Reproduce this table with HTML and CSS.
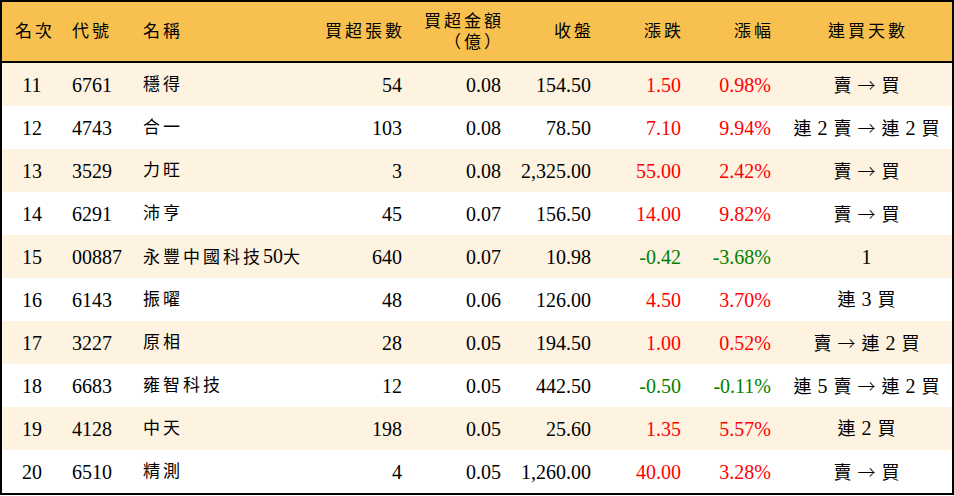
FILE: index.html
```html
<!DOCTYPE html>
<html lang="zh-Hant">
<head>
<meta charset="utf-8">
<title>買超排行</title>
<link rel="stylesheet" href="styles.css">
</head>
<body>
<table class="rank">
  <colgroup>
    <col class="c-rank"><col class="c-code"><col class="c-name"><col class="c-vol"><col class="c-amt"><col class="c-close"><col class="c-chg"><col class="c-pct"><col class="c-days">
  </colgroup>
  <thead>
    <tr>
      <th class="ctr">名次</th>
      <th class="lft">代號</th>
      <th class="lft">名稱</th>
      <th class="rgt">買超張數</th>
      <th class="rgt">買超金額<br>（億）</th>
      <th class="rgt">收盤</th>
      <th class="rgt">漲跌</th>
      <th class="rgt">漲幅</th>
      <th class="ctr">連買天數</th>
    </tr>
  </thead>
  <tbody>
    <tr><td class="ctr">11</td><td class="lft">6761</td><td class="lft zh">穩得</td><td class="rgt">54</td><td class="rgt">0.08</td><td class="rgt">154.50</td><td class="rgt up">1.50</td><td class="rgt up">0.98%</td><td class="ctr days"><span class="k">賣</span> <span class="arr">→</span> <span class="k">買</span></td></tr>
    <tr><td class="ctr">12</td><td class="lft">4743</td><td class="lft zh">合一</td><td class="rgt">103</td><td class="rgt">0.08</td><td class="rgt">78.50</td><td class="rgt up">7.10</td><td class="rgt up">9.94%</td><td class="ctr days"><span class="k">連</span> 2 <span class="k">賣</span> <span class="arr">→</span> <span class="k">連</span> 2 <span class="k">買</span></td></tr>
    <tr><td class="ctr">13</td><td class="lft">3529</td><td class="lft zh">力旺</td><td class="rgt">3</td><td class="rgt">0.08</td><td class="rgt">2,325.00</td><td class="rgt up">55.00</td><td class="rgt up">2.42%</td><td class="ctr days"><span class="k">賣</span> <span class="arr">→</span> <span class="k">買</span></td></tr>
    <tr><td class="ctr">14</td><td class="lft">6291</td><td class="lft zh">沛亨</td><td class="rgt">45</td><td class="rgt">0.07</td><td class="rgt">156.50</td><td class="rgt up">14.00</td><td class="rgt up">9.82%</td><td class="ctr days"><span class="k">賣</span> <span class="arr">→</span> <span class="k">買</span></td></tr>
    <tr><td class="ctr">15</td><td class="lft">00887</td><td class="lft zh">永豐中國科技<span class="num">50</span>大</td><td class="rgt">640</td><td class="rgt">0.07</td><td class="rgt">10.98</td><td class="rgt down">-0.42</td><td class="rgt down">-3.68%</td><td class="ctr days">1</td></tr>
    <tr><td class="ctr">16</td><td class="lft">6143</td><td class="lft zh">振曜</td><td class="rgt">48</td><td class="rgt">0.06</td><td class="rgt">126.00</td><td class="rgt up">4.50</td><td class="rgt up">3.70%</td><td class="ctr days"><span class="k">連</span> 3 <span class="k">買</span></td></tr>
    <tr><td class="ctr">17</td><td class="lft">3227</td><td class="lft zh">原相</td><td class="rgt">28</td><td class="rgt">0.05</td><td class="rgt">194.50</td><td class="rgt up">1.00</td><td class="rgt up">0.52%</td><td class="ctr days"><span class="k">賣</span> <span class="arr">→</span> <span class="k">連</span> 2 <span class="k">買</span></td></tr>
    <tr><td class="ctr">18</td><td class="lft">6683</td><td class="lft zh">雍智科技</td><td class="rgt">12</td><td class="rgt">0.05</td><td class="rgt">442.50</td><td class="rgt down">-0.50</td><td class="rgt down">-0.11%</td><td class="ctr days"><span class="k">連</span> 5 <span class="k">賣</span> <span class="arr">→</span> <span class="k">連</span> 2 <span class="k">買</span></td></tr>
    <tr><td class="ctr">19</td><td class="lft">4128</td><td class="lft zh">中天</td><td class="rgt">198</td><td class="rgt">0.05</td><td class="rgt">25.60</td><td class="rgt up">1.35</td><td class="rgt up">5.57%</td><td class="ctr days"><span class="k">連</span> 2 <span class="k">買</span></td></tr>
    <tr><td class="ctr">20</td><td class="lft">6510</td><td class="lft zh">精測</td><td class="rgt">4</td><td class="rgt">0.05</td><td class="rgt">1,260.00</td><td class="rgt up">40.00</td><td class="rgt up">3.28%</td><td class="ctr days"><span class="k">賣</span> <span class="arr">→</span> <span class="k">買</span></td></tr>
  </tbody>
</table>
</body>
</html>
```

FILE: styles.css
```css
html, body {
  margin: 0;
  padding: 0;
  background: #ffffff;
}

.rank {
  width: 954px;
  table-layout: fixed;
  border-collapse: separate;
  border-spacing: 0;
  border: 2px solid #000;
  font-family: "Liberation Serif", "Noto Sans CJK TC", serif;
  font-size: 20px;
  color: #000;
}

.c-rank { width: 60px; }
.c-code { width: 71px; }
.c-name { width: 179px; }
.c-vol { width: 100px; }
.c-amt { width: 99px; }
.c-close { width: 90px; }
.c-chg { width: 90px; }
.c-pct { width: 90px; }
.c-days { width: 171px; }

.rank th {
  background: #f8c14f;
  height: 59px;
  padding: 0 10px;
  font-weight: normal;
  font-size: 17px;
  letter-spacing: 3px;
  line-height: 21px;
  border-bottom: 2px solid #000;
  white-space: nowrap;
}

.rank th.rgt { padding-right: 7px; }
.rank th.ctr { padding-left: 13px; padding-right: 10px; }

.rank td {
  height: 43px;
  padding: 0 10px;
  line-height: 22px;
  white-space: nowrap;
  overflow: hidden;
}

.rank tbody tr:nth-child(odd) td {
  background: #fdf3e0;
}

.ctr { text-align: center; }
.lft { text-align: left; }
.rgt { text-align: right; }

.rank td.zh {
  font-size: 17px;
  letter-spacing: 3px;
}

.rank td.zh .num {
  font-size: 20px;
  letter-spacing: 0;
}

.rank td.days {
  padding: 0 4px;
  font-size: 20px;
  word-spacing: 1px;
}

.days .k {
  font-size: 18px;
}

.days .arr {
  font-family: "Noto Sans CJK TC", sans-serif;
  font-size: 18px;
  font-weight: 300;
}

.up { color: #ff0000; }
.down { color: #008000; }
```
